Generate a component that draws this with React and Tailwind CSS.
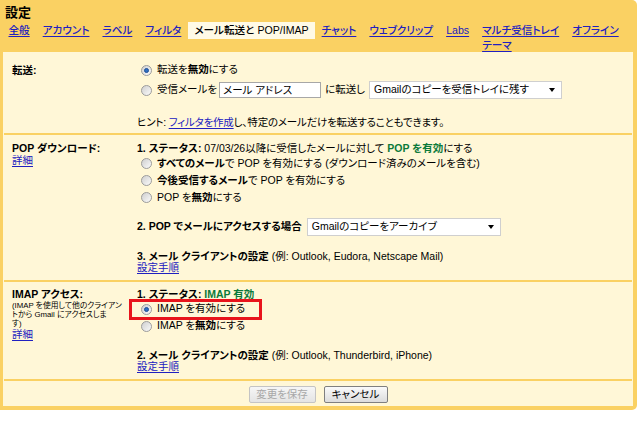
import React from 'react';

function Radio({ checked }) {
    return (
        <span className="inline-flex items-center justify-center w-[11px] h-[11px] rounded-full border border-[#9c9c9c] bg-linear-to-br from-[#cfcfcf] to-[#fbfbfb] shrink-0">
            {checked && <span className="w-[5px] h-[5px] rounded-full bg-[#2f6fc0] border border-[#1d4f96]" />}
        </span>
    );
}

function Select({ label, className }) {
    return (
        <div className={`flex items-center justify-between h-[18px] border border-[#cfcfcf] bg-white pl-[4px] pr-[6px] ${className}`}>
            <span>{label}</span>
            <span className="w-0 h-0 border-x-[3px] border-x-transparent border-t-[4px] border-t-black" />
        </div>
    );
}

function A({ children, className = '' }) {
    return <a href="#" className={`text-[#2020c0] underline underline-offset-2 ${className}`}>{children}</a>;
}

function Divider() {
    return <div className="h-[2px] bg-[#fad163] mx-[1px]" />;
}

const tabs = ['全般', 'アカウント', 'ラベル', 'フィルタ'];
const tabsRight = ['チャット', 'ウェブクリップ', 'Labs'];

export default function App() {
    return (
        <div className="w-[642px] h-[422px] bg-white text-black text-[10.5px] [font-family:'Liberation_Sans','Noto_Sans_CJK_JP',sans-serif] [font-feature-settings:'palt']">
            <div className="w-[637px] bg-[#fad163] rounded-r-[5px] pl-[3px] pr-[4px] pb-[4px]">
                {/* header + tabs */}
                <div className="h-[52px] -ml-[3px]">
                    <div className="pl-[5px] pt-[5px] text-[13px] leading-[15px] font-bold">設定</div>
                    <div className="flex items-start pl-[2px] mt-[2px] text-[10.6px] font-medium whitespace-nowrap">
                        {tabs.map((t) => (
                            <div key={t} className="px-[6.5px] h-[17px] leading-[16px]"><A>{t}</A></div>
                        ))}
                        <div className="px-[6.5px] h-[17px] leading-[16px] bg-[#fffae6]">メール転送と POP/IMAP</div>
                        {tabsRight.map((t) => (
                            <div key={t} className="px-[6.5px] h-[17px] leading-[16px]"><A>{t}</A></div>
                        ))}
                        <div className="px-[6.5px] flex flex-col leading-[15px] pt-[1px]">
                            <A>マルチ受信トレイ</A>
                            <A>テーマ</A>
                        </div>
                        <div className="px-[6.5px] h-[17px] leading-[16px]"><A>オフライン</A></div>
                    </div>
                </div>

                <div className="bg-[#fff7d7]">
                    {/* forwarding */}
                    <div className="flex pl-[9px] pt-[9px] pb-[4px]">
                        <div className="w-[125px] pt-[2px] font-bold leading-[14px]">転送:</div>
                        <div className="flex-1">
                            <div className="flex items-center h-[18px] ml-[4px] gap-[5px]">
                                <Radio checked />
                                <span>転送を<b>無効</b>にする</span>
                            </div>
                            <div className="flex items-center h-[18px] ml-[4px] mt-[2px] whitespace-nowrap">
                                <Radio />
                                <span className="ml-[5px]">受信メールを</span>
                                <div className="ml-[2px] w-[102px] h-[16px] border border-[#a7a7a7] bg-white pl-[3px] leading-[14px]">メール アドレス</div>
                                <span className="ml-[4px]">に転送し</span>
                                <Select label="Gmailのコピーを受信トレイに残す" className="ml-[4px] w-[193px]" />
                            </div>
                            <div className="mt-[16px] h-[14px] leading-[14px] tracking-[-0.2px]">
                                ヒント: <A>フィルタを作成</A>し、特定のメールだけを転送することもできます。
                            </div>
                        </div>
                    </div>
                    <Divider />

                    {/* POP */}
                    <div className="flex pl-[9px] pt-[6px] pb-[7px]">
                        <div className="w-[125px]">
                            <div className="font-bold leading-[14px]">POP ダウンロード:</div>
                            <div className="leading-[11px]"><A>詳細</A></div>
                        </div>
                        <div className="flex-1">
                            <div className="leading-[14px] h-[14px]">
                                <b>1. ステータス:</b> 07/03/26以降に受信したメールに対して <b className="text-[#0b7a3a]">POP を有効</b>にする
                            </div>
                            <div className="flex items-center h-[17px] ml-[4px] gap-[5px]">
                                <Radio />
                                <span><b>すべてのメール</b>で POP を有効にする (ダウンロード済みのメールを含む)</span>
                            </div>
                            <div className="flex items-center h-[17px] ml-[4px] gap-[5px]">
                                <Radio />
                                <span><b>今後受信するメール</b>で POP を有効にする</span>
                            </div>
                            <div className="flex items-center h-[17px] ml-[4px] gap-[5px]">
                                <Radio />
                                <span>POP を<b>無効</b>にする</span>
                            </div>
                            <div className="flex items-center h-[18px] mt-[12px]">
                                <b>2. POP でメールにアクセスする場合</b>
                                <Select label="Gmailのコピーをアーカイブ" className="ml-[5px] w-[194px]" />
                            </div>
                            <div className="mt-[15px] leading-[11px]">
                                <b>3. メール クライアントの設定</b> (例: Outlook, Eudora, Netscape Mail)
                            </div>
                            <div className="leading-[11px]"><A>設定手順</A></div>
                        </div>
                    </div>
                    <Divider />

                    {/* IMAP */}
                    <div className="flex pl-[9px] pt-[6px] pb-[7px]">
                        <div className="w-[125px]">
                            <div className="font-bold leading-[13px]">IMAP アクセス:</div>
                            <div className="text-[7.8px] leading-[9px] whitespace-nowrap">
                                <div>(IMAP を使用して他のクライアン</div>
                                <div>トから Gmail にアクセスしま</div>
                                <div>す)</div>
                            </div>
                            <div className="leading-[11px] mt-[1px]"><A>詳細</A></div>
                        </div>
                        <div className="flex-1">
                            <div className="leading-[13px] h-[13px]">
                                <b>1. ステータス: </b><b className="text-[#0b7a3a]">IMAP 有効</b>
                            </div>
                            <div className="relative flex items-center h-[16px] ml-[4px] gap-[5px]">
                                <Radio checked />
                                <span>IMAP を有効にする</span>
                                <div className="absolute left-[-12px] top-[-2px] w-[133px] h-[21px] border-[3px] border-[#e8141c]" />
                            </div>
                            <div className="flex items-center h-[18px] ml-[4px] gap-[5px]">
                                <Radio />
                                <span>IMAP を<b>無効</b>にする</span>
                            </div>
                            <div className="mt-[15px] leading-[11px]">
                                <b>2. メール クライアントの設定</b> (例: Outlook, Thunderbird, iPhone)
                            </div>
                            <div className="leading-[11px]"><A>設定手順</A></div>
                        </div>
                    </div>
                    <Divider />

                    {/* buttons */}
                    <div className="flex justify-center gap-[8px] pt-[5px] pb-[3px]">
                        <button className="w-[67px] h-[17px] leading-[15px] border border-[#c4c4c4] rounded-[2px] bg-linear-to-b from-[#f6f6f6] to-[#e4e4e4] text-[#a8a8a8]">変更を保存</button>
                        <button className="w-[64px] h-[17px] leading-[15px] border border-[#7f7f7f] rounded-[2px] bg-linear-to-b from-[#fafafa] to-[#dcdcdc]">キャンセル</button>
                    </div>
                </div>
            </div>
        </div>
    );
}
